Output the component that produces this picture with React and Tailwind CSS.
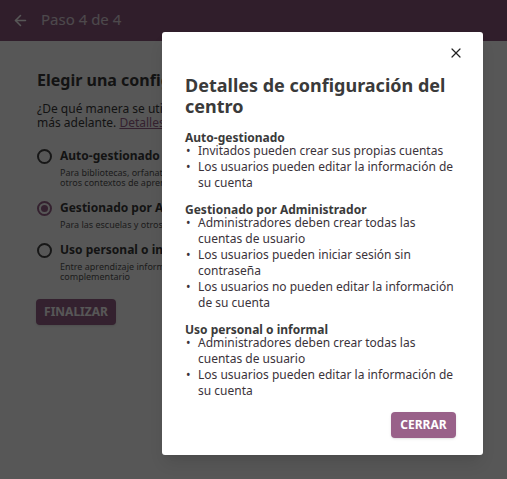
import React from 'react';
import { ArrowLeft, X } from 'lucide-react';

const SECTIONS = [
  {
    title: 'Auto-gestionado',
    items: [
      'Invitados pueden crear sus propias cuentas',
      'Los usuarios pueden editar la información de su cuenta',
    ],
  },
  {
    title: 'Gestionado por Administrador',
    items: [
      'Administradores deben crear todas las cuentas de usuario',
      'Los usuarios pueden iniciar sesión sin contraseña',
      'Los usuarios no pueden editar la información de su cuenta',
    ],
  },
  {
    title: 'Uso personal o informal',
    items: [
      'Administradores deben crear todas las cuentas de usuario',
      'Los usuarios pueden editar la información de su cuenta',
    ],
  },
];

const OPTIONS = [
  {
    label: 'Auto-gestionado',
    desc: ['Para bibliotecas, orfanatos, centros comunitarios y', 'otros contextos de aprendizaje no formales'],
  },
  {
    label: 'Gestionado por Administrador',
    desc: ['Para las escuelas y otros contextos formales'],
    selected: true,
  },
  {
    label: 'Uso personal o informal',
    desc: ['Entre aprendizaje informal, uso en casa o como apoyo', 'complementario'],
  },
];

function Radio({ selected }) {
  return (
    <span className={`w-[15px] h-[15px] rounded-full border-2 flex items-center justify-center flex-shrink-0 ${selected ? 'border-[#996189]' : 'border-[#444]'}`}>
      {selected && <span className="w-[7px] h-[7px] rounded-full bg-[#996189]" />}
    </span>
  );
}

export default function App() {
  return (
    <div className="relative w-[507px] h-[479px] overflow-hidden bg-white text-[#3a3a3a] font-['Noto_Sans',sans-serif]">
      {/* App bar */}
      <header className="h-[41px] bg-[#8c5a7e] flex items-center pl-3 gap-[12px] text-white">
        <ArrowLeft className="w-[17px] h-[17px]" strokeWidth={2.2} />
        <span className="text-[15px] opacity-75 -mt-[2px]">Paso 4 de 4</span>
      </header>

      {/* Page content */}
      <main className="pl-[37px] pr-6 pt-[29px]">
        <h1 className="text-[16px] font-bold leading-5">Elegir una configuración del centro</h1>
        <p className="mt-[12px] text-[12px] leading-[14px] whitespace-nowrap">
          ¿De qué manera se utilizará este centro? Puede cambiarlo
          <br />
          más adelante. <span className="underline text-[#996189]">Detalles de configuración</span>
        </p>
        <div className="mt-[18px] flex flex-col gap-[12px]">
          {OPTIONS.map(o => (
            <div key={o.label} className="flex gap-[8px]">
              <div className="pt-[1px]"><Radio selected={o.selected} /></div>
              <div>
                <p className="text-[12px] font-bold leading-4">{o.label}</p>
                <p className="text-[9px] leading-[10px] mt-[4px] whitespace-nowrap text-[#555]">
                  {o.desc.map((d, i) => (
                    <React.Fragment key={i}>{i > 0 && <br />}{d}</React.Fragment>
                  ))}
                </p>
              </div>
            </div>
          ))}
        </div>
        <button className="mt-[17px] h-[26px] w-[80px] -ml-[1px] rounded-sm bg-[#996189] text-white text-[12px] font-bold shadow">
          FINALIZAR
        </button>
      </main>

      {/* Overlay */}
      <div className="absolute inset-0 bg-black/[0.66]" />

      {/* Dialog */}
      <div className="absolute left-[162px] top-[32px] w-[321px] bg-white rounded-[3px] shadow-lg px-[23px] pt-[13px] pb-[17px]">
        <div className="flex justify-end -mr-[4px]">
          <X className="w-[16px] h-[16px] text-[#222]" strokeWidth={1.8} />
        </div>
        <h2 className="mt-[14px] text-[18px] font-bold leading-[21px] text-[#3a3a3a]">
          Detalles de configuración del centro
        </h2>
        <div className="mt-[16px] flex flex-col gap-[14px]">
          {SECTIONS.map(s => (
            <section key={s.title}>
              <h3 className="text-[12px] font-bold leading-[10px]">{s.title}</h3>
              <ul>
                {s.items.map(it => (
                  <li key={it} className="flex text-[12px] leading-4 text-[#3b333a]">
                    <span className="w-[13px] flex-shrink-0 pl-[1px]">•</span>
                    <span>{it}</span>
                  </li>
                ))}
              </ul>
            </section>
          ))}
        </div>
        <div className="mt-[13px] flex justify-end mr-[4px]">
          <button className="h-[26px] w-[65px] rounded-sm bg-[#996189] text-white text-[12px] font-bold shadow">
            CERRAR
          </button>
        </div>
      </div>
    </div>
  );
}
